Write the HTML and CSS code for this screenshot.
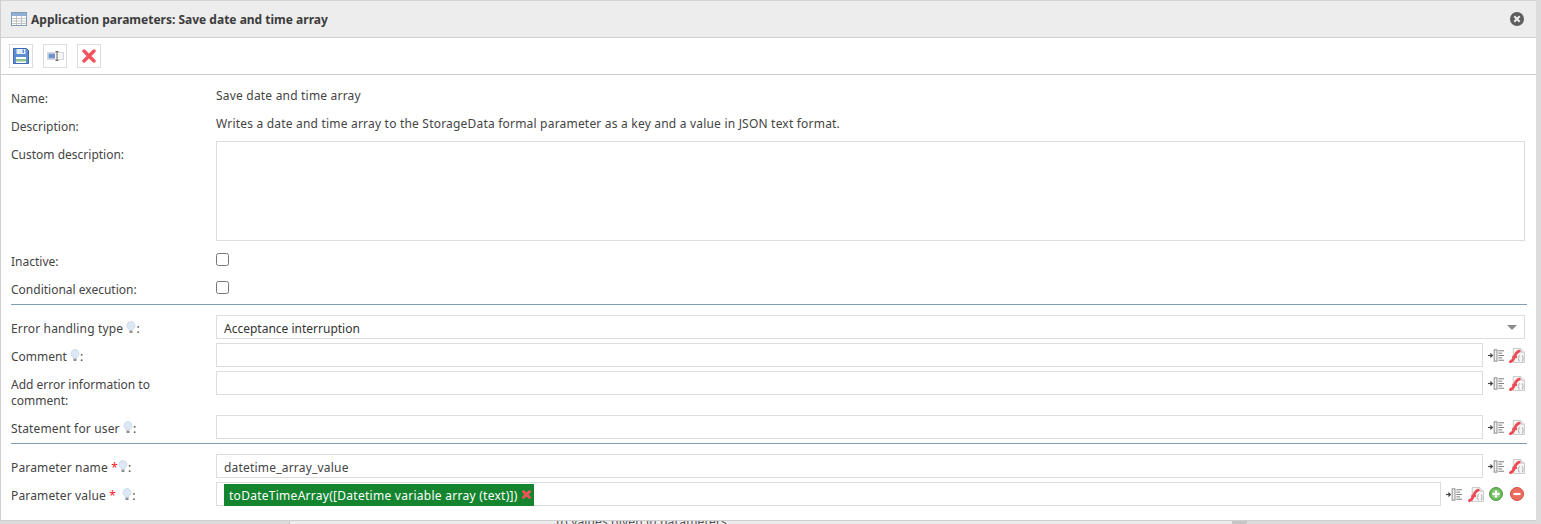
FILE: index.html
```html
<!DOCTYPE html>
<html lang="en">
<head>
<meta charset="utf-8">
<title>Application parameters</title>
<link rel="stylesheet" href="styles.css">
</head>
<body>
<svg class="defs" width="0" height="0" aria-hidden="true">
  <symbol id="bulb" viewBox="0 0 10 13">
    <path d="M5 .5a4 4 0 0 0-2.400 7.200c.5.500.7 1 .7 1.600h3.400c0-.6.200-1.100.7-1.600A4 4 0 0 0 5 .5z" fill="#dce9f4" stroke="#c3d3e0" stroke-width=".7"/>
    <path d="M3.500 9.700h3v2.300h-3z" fill="#8f8f8f"/>
  </symbol>
  <symbol id="indent" viewBox="0 0 18 13">
    <path d="M0 6.500h4" stroke="#444" stroke-width="1.200" fill="none"/>
    <path d="M2.500 3.500l3 3-3 3z" fill="#444"/>
    <rect x="6.500" y=".5" width="3" height="12" fill="#f2f2f2" stroke="#888"/>
    <path d="M11 1.500h6M11 4h4M11 6.500h6M11 9h4M11 11.500h6" stroke="#777" fill="none"/>
  </symbol>
  <symbol id="script" viewBox="0 0 17 16">
    <path d="M4.500.5h8l4 4v11h-12z" fill="#f6f6f6" stroke="#c8c8c8"/>
    <path d="M12.500.5v4h4" fill="#e8e8e8" stroke="#c8c8c8"/>
    <path d="M11.300 8c-.8 0-.9.500-.9 1.300s0 1.400-.7 1.700c.7.300.7.900.7 1.700s.1 1.300.9 1.300M13.700 8c.8 0 .9.500.9 1.300s0 1.400.7 1.700c-.7.300-.7.900-.7 1.700s-.1 1.300-.9 1.300" fill="none" stroke="#8e8e8e" stroke-width=".8"/>
    <path d="M1.500 14.500c3-.7 3.600-3.500 4.800-6.300S8.500 4.200 10.800 3.400" fill="none" stroke="#f04a55" stroke-width="3" stroke-linecap="round"/>
    <path d="M3.500 9.500h5" stroke="#f04a55" stroke-width="2.400"/>
  </symbol>
</svg>
<div class="backdrop">
  <div class="behind"><span class="behind-text">to values given in parameters</span><span class="behind-thumb"></span></div>
</div>
<main class="window">
  <header class="titlebar">
    <svg class="title-icon" viewBox="0 0 16 14" width="16" height="14" aria-hidden="true">
      <rect x=".5" y=".5" width="15" height="13" fill="#fff" stroke="#7f9db9"/>
      <rect x="1" y="1" width="14" height="3" fill="#8fb0d4"/>
      <path d="M1 6.500h14M1 9h14M1 11.500h14M5.500 4v9M10.500 4v9" stroke="#b4b4b4" stroke-width=".8" fill="none"/>
    </svg>
    <h1 class="title">Application parameters: Save date and time array</h1>
    <svg class="close" viewBox="0 0 14 14" width="14" height="14" aria-hidden="true">
      <circle cx="7" cy="7" r="7" fill="#5e5e5e"/>
      <path d="M4.300 4.300l5.400 5.400M9.700 4.300l-5.400 5.400" stroke="#f0f0f0" stroke-width="2"/>
    </svg>
  </header>
  <div class="toolbar">
    <button class="tool" type="button" aria-label="Save">
      <svg viewBox="0 0 16 16" width="16" height="16">
        <path d="M.5.500h13l2 2v13H.5z" fill="#5f8fd0" stroke="#3c68ac"/>
        <rect x="3.500" y="1" width="9" height="5" fill="#e6eef8"/>
        <rect x="9.500" y="1.500" width="1.500" height="3.500" fill="#5f8fd0"/>
        <rect x="3" y="9" width="10" height="6" fill="#fff"/>
        <rect x="3" y="11" width="10" height="2.500" fill="#8cc48c"/>
      </svg>
    </button>
    <button class="tool" type="button" aria-label="Rename">
      <svg viewBox="0 0 17 10" width="17" height="10">
        <rect x=".5" y="1.500" width="16" height="7" fill="#f6f6f6" stroke="#d6d6d6"/>
        <rect x="1.500" y="2.500" width="6.500" height="5" fill="#6d93cc"/>
        <path d="M8.500.500h3M8.500 9.500h3M10 .5v9" stroke="#666" fill="none"/>
      </svg>
    </button>
    <button class="tool" type="button" aria-label="Delete">
      <svg viewBox="0 0 14 14" width="14" height="14">
        <path d="M2 2l10 10M12 2L2 12" stroke="#f4525c" stroke-width="3.400" stroke-linecap="round"/>
      </svg>
    </button>
  </div>
  <form class="form">
    <div class="row row-upper"><span class="label">Name:</span><span class="static">Save date and time array</span></div>
    <div class="row row-upper"><span class="label">Description:</span><span class="static">Writes a date and time array to the StorageData formal parameter as a key and a value in JSON text format.</span></div>
    <div class="row row-upper row-area"><span class="label">Custom description:</span><textarea class="area" aria-label="Custom description"></textarea></div>
    <div class="row row-upper row-check"><span class="label">Inactive:</span><input class="check" type="checkbox" aria-label="Inactive"></div>
    <div class="row row-upper row-check row-last"><span class="label">Conditional execution:</span><input class="check" type="checkbox" aria-label="Conditional execution"></div>
    <hr class="rule">
    <div class="row"><span class="label label-wide">Error handling type <svg class="bulb"><use href="#bulb"/></svg>:</span>
      <div class="field select">Acceptance interruption<span class="caret"></span></div></div>
    <div class="row"><span class="label">Comment <svg class="bulb"><use href="#bulb"/></svg>:</span>
      <div class="field"></div><span class="actions"><svg class="ic-indent"><use href="#indent"/></svg><svg class="ic-script"><use href="#script"/></svg></span></div>
    <div class="row row-tall"><span class="label">Add error information to comment:</span>
      <div class="field"></div><span class="actions"><svg class="ic-indent"><use href="#indent"/></svg><svg class="ic-script"><use href="#script"/></svg></span></div>
    <div class="row"><span class="label label-wide">Statement for user <svg class="bulb"><use href="#bulb"/></svg>:</span>
      <div class="field"></div><span class="actions"><svg class="ic-indent"><use href="#indent"/></svg><svg class="ic-script"><use href="#script"/></svg></span></div>
    <hr class="rule">
    <div class="row"><span class="label label-wide">Parameter name <b class="req">*</b><svg class="bulb"><use href="#bulb"/></svg>:</span>
      <div class="field field-text">datetime_array_value</div><span class="actions"><svg class="ic-indent"><use href="#indent"/></svg><svg class="ic-script"><use href="#script"/></svg></span></div>
    <div class="row"><span class="label label-wide">Parameter value <b class="req">*</b> <svg class="bulb bulb-far"><use href="#bulb"/></svg>:</span>
      <div class="field field-chip"><span class="chip">toDateTimeArray([Datetime variable array (text)])<svg viewBox="0 0 10 10" width="11" height="11" class="chip-x"><path d="M1.500 1.500l7 7M8.500 1.500l-7 7" stroke="#f0535c" stroke-width="2.600"/></svg></span></div>
      <span class="actions actions-wide"><svg class="ic-indent"><use href="#indent"/></svg><svg class="ic-script"><use href="#script"/></svg>
        <svg class="round" viewBox="0 0 14 14" width="14" height="14"><circle cx="7" cy="7" r="6.500" fill="#6fbb5e" stroke="#4f9a42"/><circle cx="7" cy="7" r="4" fill="#93d083"/><path d="M3.500 7h7M7 3.500v7" stroke="#fff" stroke-width="2"/></svg>
        <svg class="round round-del" viewBox="0 0 14 14" width="14" height="14"><circle cx="7" cy="7" r="6.500" fill="#ec6b5e" stroke="#d34f44"/><path d="M3.500 7h7" stroke="#fff" stroke-width="2.200"/></svg></span></div>
  </form>
</main>
</body>
</html>
```

FILE: styles.css
```css
* { box-sizing: border-box; }
html, body { margin: 0; height: 524px; overflow: hidden; }
body {
  position: relative;
  background: #dcdcdc;
  font-family: "Noto Sans", sans-serif;
  font-size: 12px;
  color: #444;
}
.defs { position: absolute; }
.backdrop { position: absolute; inset: 0; }
.behind {
  position: absolute;
  left: 289px; width: 958px; top: 510px; height: 14px;
  background: #ececec;
  border-left: 1px solid #c8c8c8;
  border-right: 1px solid #c8c8c8;
}
.behind-text { position: absolute; left: 266px; top: 3px; color: #555; letter-spacing: .15px; }
.behind-thumb { position: absolute; right: 0; top: 0; width: 14px; height: 14px; background: #c6c6c6; }
.window {
  position: relative;
  width: 1536px;
  height: 521px;
  background: #fff;
  border: solid #cfcfcf;
  border-width: 0 0 1px 1px;
}
.titlebar {
  display: flex;
  align-items: center;
  height: 38px;
  padding: 0 12px 0 10px;
  background: #ededed;
  border-bottom: 1px solid #cfcfcf;
  border-top: 1px solid #d4d4d4;
}
.title-icon { margin-right: 4px; }
.title { flex: 1; margin: 0; font-size: 12px; font-weight: bold; color: #3c3c3c; }
.toolbar {
  display: flex;
  gap: 10px;
  height: 37px;
  padding: 6px 8px 0;
  border-bottom: 1px solid #cfcfcf;
}
.tool {
  display: flex;
  align-items: center;
  justify-content: center;
  width: 24px;
  height: 24px;
  padding: 0;
  background: #fff;
  border: 1px solid #ddd;
}
.form { padding: 9px 9px 0 10px; }
.row {
  display: flex;
  align-items: flex-start;
  min-height: 28px;
}
.label { flex: 0 0 205px; padding: 6px 40px 0 0; line-height: 16px; color: #444; }
.label-wide { letter-spacing: .15px; }
.row-upper .label { padding-top: 7px; }
.static { padding-top: 4px; line-height: 16px; letter-spacing: .2px; }
.row-area { height: 107px; }
.area {
  display: block;
  width: 1309px;
  height: 100px;
  margin-top: 1px;
  border: 1px solid #ddd;
  background: #fff;
  resize: none;
}
.row-check { height: 28px; }
.row-last { height: 29px; }
.check { width: 13px; height: 13px; margin: 6px 0 0; }
.rule { height: 1px; margin: 0 0 10px; border: 0; background: #7f9db3; width: 1516px; }
.field {
  width: 1267px;
  height: 24px;
  padding: 1px 7px 0;
  line-height: 23px;
  font-size: 12px;
  color: #444;
  border: 1px solid #ddd;
  background: #fff;
}
.field-text { letter-spacing: .2px; }
.select { position: relative; width: 1309px; color: #333; }
.caret {
  position: absolute;
  right: 7px; top: 9px;
  border: 5px solid transparent;
  border-top: 5px solid #8c8c8c;
  border-bottom: 0;
}
.row-tall { min-height: 44px; }
.actions { display: flex; align-items: center; gap: 4px; height: 24px; margin-left: 5px; }
.ic-indent { width: 17px; height: 13px; }
.ic-script { width: 16px; height: 15px; }
.bulb { width: 10px; height: 13px; vertical-align: -1px; }
.bulb-far { margin-left: 3px; }
.req { color: #f22; font-weight: normal; }
.field-chip { width: 1225px; padding: 1px 7px; line-height: 22px; }
.chip {
  display: inline-flex;
  align-items: center;
  gap: 3px;
  width: 310px;
  height: 22px;
  padding: 2px 0 0 5px;
  background: #14842f;
  color: #fff;
  font-size: 12px;
  line-height: 20px;
  letter-spacing: .27px;
  white-space: nowrap;
}
.chip-x { margin-top: -4px; }
.actions-wide { gap: 5px; }
.round-del { margin-left: 2px; }
```
